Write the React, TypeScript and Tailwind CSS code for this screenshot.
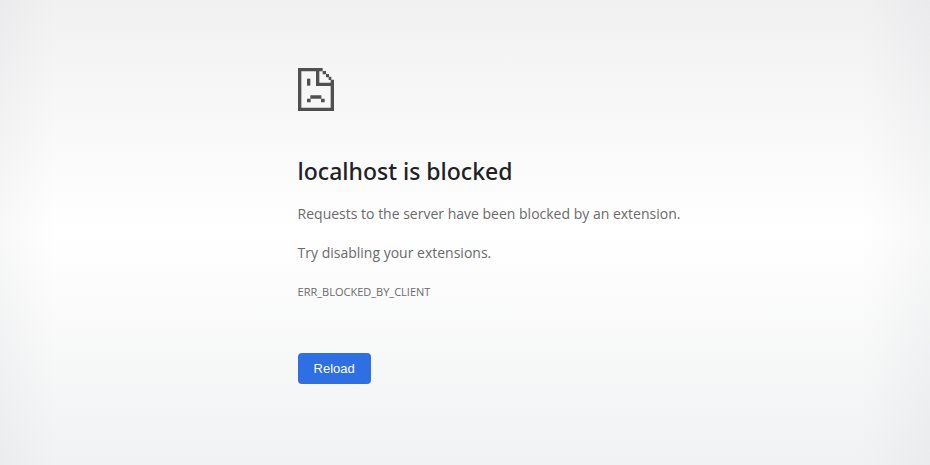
import React from 'react';

const SadPageIcon = () => (
  <svg
    className="w-9 h-[43px] text-[#505050]"
    viewBox="0 0 108 129"
    fill="currentColor"
    aria-hidden="true"
  >
    {/* page outline and folded corner */}
    <path d="M0 0H74V10H64V44H108V129H0ZM10 10V119H98V54H54V10Z" fillRule="evenodd" />
    <path d="M74 9H84V19H74ZM84 18H93V28H84ZM92 26H100V35H108V46H98V36H92Z" />
    {/* eye */}
    <path d="M27 32H37V53H27Z" />
    {/* mouth */}
    <path d="M37 82H70V92H37ZM27 92H38V103H27ZM69 92H80V103H69Z" />
  </svg>
);

const App = () => {
  const messages = [
    "Requests to the server have been blocked by an extension.",
    "Try disabling your extensions."
  ];

  return (
    <div className="min-h-screen bg-linear-to-b from-[#f1f1f2] via-white to-[#f1f2f3]">
      <div className="min-h-screen bg-[linear-gradient(to_right,#0a142807_0px,transparent_56px,transparent_calc(100%-72px),#0a142808_100%)]">
        <main className="pl-[32%] pr-6 pt-[68px] pb-20 font-['Open_Sans',sans-serif] text-[#6a6a6a]">
          <SadPageIcon />
          <h1 className="mt-[42px] font-['Noto_Sans',sans-serif] text-[23px] leading-9 font-medium text-[#202124]">
            localhost is blocked
          </h1>
          <div className="mt-[13px] space-y-[15px]">
            {messages.map((message, index) => (
              <p key={index} className="text-sm leading-6">
                {message}
              </p>
            ))}
            <p className="text-[11px] leading-6">ERR_BLOCKED_BY_CLIENT</p>
          </div>
          <button
            type="button"
            className="mt-[49px] h-[31px] px-4 rounded bg-[#2f6fe4] font-['Liberation_Sans',Arial,sans-serif] text-[13px] text-white"
          >
            Reload
          </button>
        </main>
      </div>
    </div>
  );
};

export default App;
